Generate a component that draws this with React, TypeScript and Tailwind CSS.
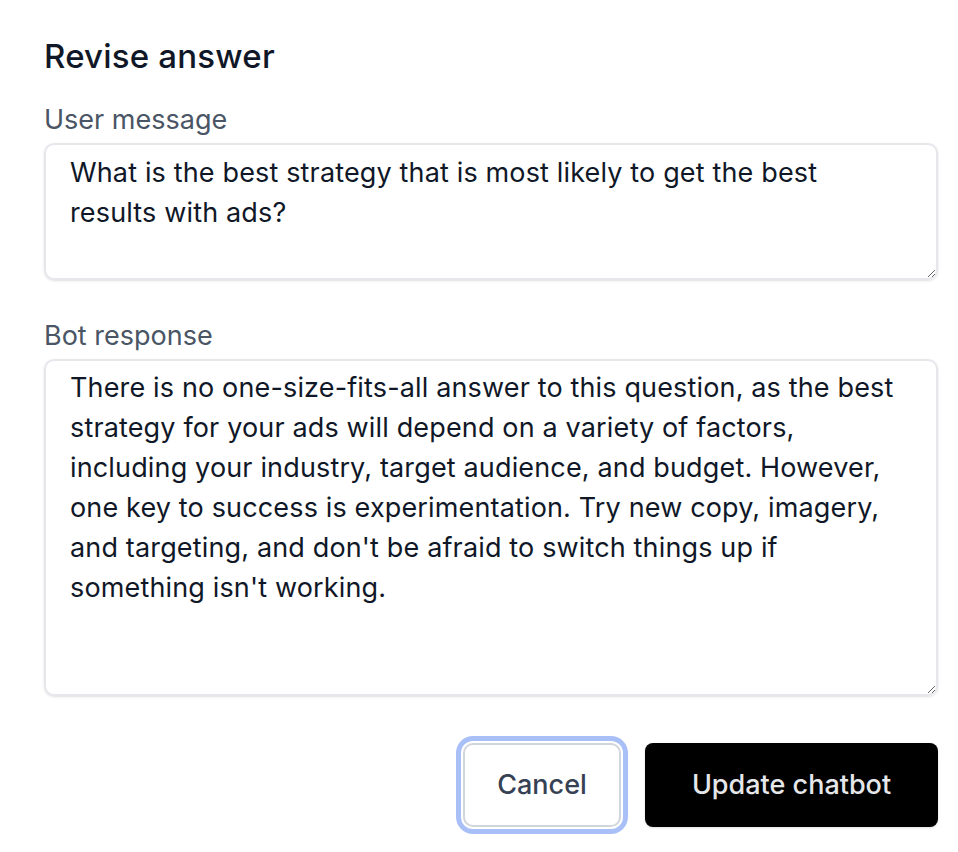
import React from "react";

const RevisePanel = () => {
  const userMsg =
    "What is the best strategy that is most likely to get the best results with ads?";
  const botMsg =
    "There is no one-size-fits-all answer to this question, as the best strategy for your ads will depend on a variety of factors, including your industry, target audience, and budget. However, one key to success is experimentation. Try new copy, imagery, and targeting, and don't be afraid to switch things up if something isn't working.";

  return (
    <div
      className="min-h-screen bg-white pl-[44px] pr-[20px] pt-[36px]"
      style={{ fontFamily: "Inter, 'Noto Sans', sans-serif" }}
    >
      <h2 className="text-[33px] leading-[40px] font-medium tracking-[0.2px] text-gray-900">
        Revise answer
      </h2>

      <div className="mt-[28px]">
        <label className="block text-[27px] leading-[32px] text-gray-600">
          User message
        </label>
        <textarea
          defaultValue={userMsg}
          className="mt-[7px] block w-full h-[137px] rounded-[10px] border-2 border-gray-200 shadow-sm pl-[24px] pr-[34px] py-[8px] text-[27px] leading-[40px] tracking-[0.15px] text-gray-900 outline-none"
        />
      </div>

      <div className="mt-[40px]">
        <label className="block text-[27px] leading-[32px] text-gray-600">
          Bot response
        </label>
        <textarea
          defaultValue={botMsg}
          className="mt-[7px] block w-full h-[337px] rounded-[10px] border-2 border-gray-200 shadow-sm pl-[24px] pr-[34px] py-[7px] text-[27px] leading-[40px] tracking-[0.15px] text-gray-900 outline-none"
        />
      </div>

      <div className="mt-[47px] flex justify-end gap-[24px]">
        <button className="h-[84px] w-[158px] rounded-[10px] border-2 border-gray-300 bg-white text-[27px] font-medium text-gray-700 ring-[5px] ring-[#a8c0f7] ring-offset-2">
          Cancel
        </button>
        <button className="h-[84px] w-[293px] rounded-[8px] bg-black text-[27px] font-medium text-gray-200 shadow-sm">
          Update chatbot
        </button>
      </div>
    </div>
  );
};

export default function App() {
  return <RevisePanel />;
}
